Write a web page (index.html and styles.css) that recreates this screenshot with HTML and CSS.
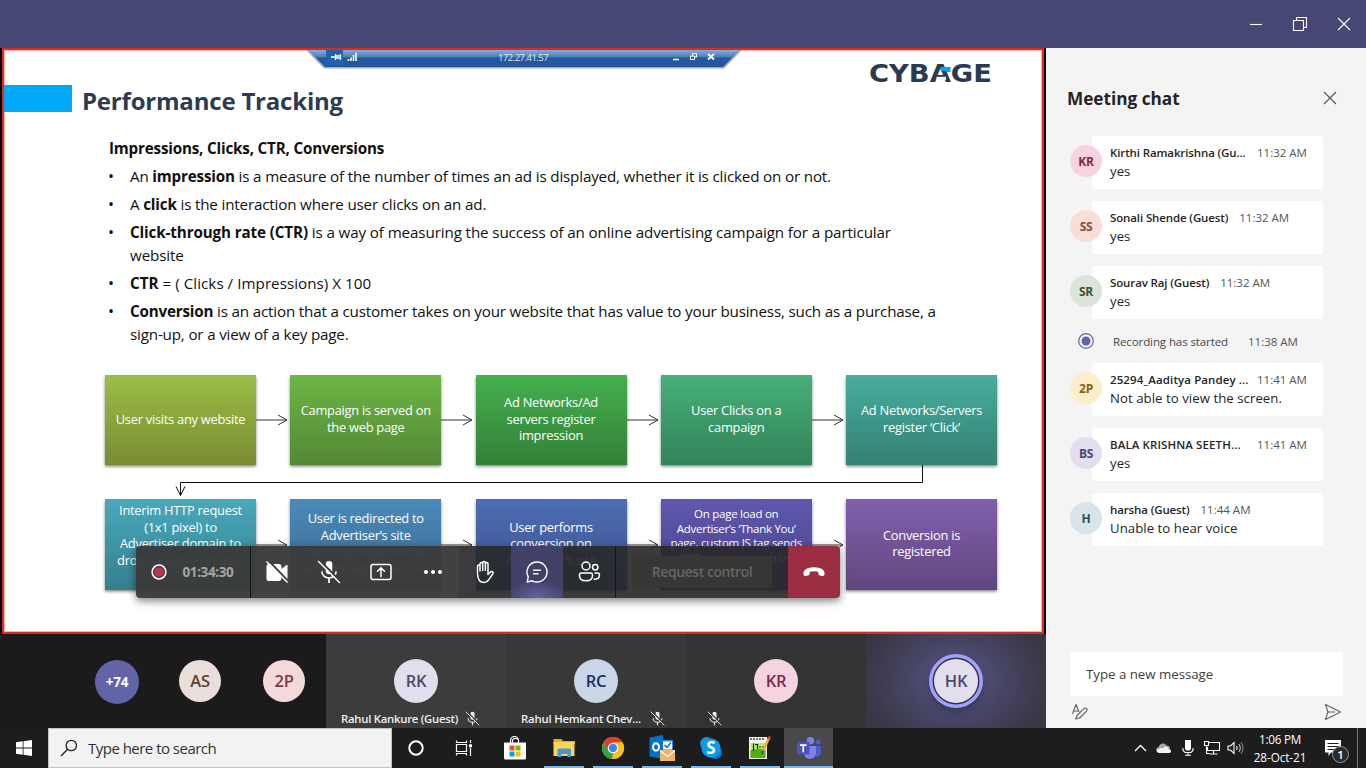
FILE: index.html
```html
<!DOCTYPE html>
<html lang="en">
<head>
<meta charset="utf-8">
<title>Meeting</title>
<link rel="stylesheet" href="styles.css">
</head>
<body>
<svg class="defs" aria-hidden="true">
  <symbol id="mic-off" viewBox="0 0 22 22">
    <rect x="8" y="1" width="6" height="12" rx="3" fill="currentColor"/>
    <path d="M4.500 10.500a6.500 6 0 0 0 13 0M11 16.500V21" fill="none" stroke="currentColor" stroke-width="1.600"/>
    <path d="M2.200 .2 22.200 20.200" stroke="#3b3b3d" stroke-width="2"/>
    <path d="M1 1 21 21" stroke="currentColor" stroke-width="1.300"/>
  </symbol>
</svg>
<div class="desktop">
  <header class="titlebar">
    <svg width="110" height="20" viewBox="0 0 110 20" fill="none" stroke="#fff" stroke-width="1.1">
      <path d="M4 10.500h12"/>
      <path d="M47.500 6.500h10v10h-10zM50.500 6.500v-3h10v10h-3"/>
      <path d="M92 4l12 12M104 4l-12 12"/>
    </svg>
  </header>

  <div class="workspace">
    <main class="stage">
      <section class="shared">
        <div class="slide">
          <div class="slide-head">
            <div class="accent"></div>
            <h1 class="slide-title">Performance Tracking</h1>
            <svg class="logo" width="124" height="22" viewBox="0 0 124 22">
              <text x="0" y="20" textLength="123" lengthAdjust="spacingAndGlyphs">CYBAGE</text>
              <path d="M67.500 14.800h9.500v3h-9.500z" fill="#fff"/>
              <path d="M71.500 5h10v5h-4v-1h-6z" fill="#00a6f5"/>
            </svg>
          </div>
          <div class="slide-text">
            <p class="lead"><b>Impressions, Clicks, CTR, Conversions</b></p>
            <ul class="bullets">
              <li class="b1">An <b>impression</b> is a measure of the number of times an ad is displayed, whether it is clicked on or not.</li>
              <li class="b2">A <b>click</b> is the interaction where user clicks on an ad.</li>
              <li class="b3"><b>Click-through rate (CTR)</b> is a way of measuring the success of an online advertising campaign for a particular<br>website</li>
              <li class="b4"><b>CTR</b> = ( Clicks / Impressions) X 100</li>
              <li class="b5"><b>Conversion</b> is an action that a customer takes on your website that has value to your business, such as a purchase, a<br>sign-up, or a view of a key page.</li>
            </ul>
          </div>
          <div class="flow">
            <div class="flow-row">
              <div class="step s1">User visits any website</div>
              <svg class="arrow" viewBox="0 0 34 12"><path d="M0 6h31M22 1l9 5-9 5"/></svg>
              <div class="step s2">Campaign is served on<br>the web page</div>
              <svg class="arrow" viewBox="0 0 34 12"><path d="M0 6h31M22 1l9 5-9 5"/></svg>
              <div class="step s3">Ad Networks/Ad<br>servers register<br>impression</div>
              <svg class="arrow" viewBox="0 0 34 12"><path d="M0 6h31M22 1l9 5-9 5"/></svg>
              <div class="step s4">User Clicks on a<br>campaign</div>
              <svg class="arrow" viewBox="0 0 34 12"><path d="M0 6h31M22 1l9 5-9 5"/></svg>
              <div class="step s5">Ad Networks/Servers<br>register ‘Click’</div>
            </div>
            <svg class="elbow" width="892" height="34" viewBox="0 0 892 34"><path d="M817.500 0V17.500H75.500V30.500M71 21.500l4.500 9 4.500-9"/></svg>
            <div class="flow-row">
              <div class="step s6">Interim HTTP request<br>(1x1 pixel) to<br>Advertiser domain to<br>drop a Cookie on user<br>PC</div>
              <svg class="arrow" viewBox="0 0 34 12"><path d="M0 6h31M22 1l9 5-9 5"/></svg>
              <div class="step s7">User is redirected to<br>Advertiser’s site<br>(landing page) via Ad<br>Network/Ad Server URL</div>
              <svg class="arrow" viewBox="0 0 34 12"><path d="M0 6h31M22 1l9 5-9 5"/></svg>
              <div class="step s8">User performs<br>conversion on<br>Advertiser’s site</div>
              <svg class="arrow" viewBox="0 0 34 12"><path d="M0 6h31M22 1l9 5-9 5"/></svg>
              <div class="step s9">On page load on<br>Advertiser’s ‘Thank You’<br>page, custom JS tag sends<br>HTTP request to retrieve<br>cookie info</div>
              <svg class="arrow" viewBox="0 0 34 12"><path d="M0 6h31M22 1l9 5-9 5"/></svg>
              <div class="step s10">Conversion is<br>registered</div>
            </div>
          </div>
        </div>

        <div class="remote-bar">
          <svg width="436" height="19" viewBox="0 0 436 19">
            <defs><linearGradient id="rb" x1="0" y1="0" x2="0" y2="1"><stop offset="0" stop-color="#82aedb"/><stop offset=".4" stop-color="#4a80bd"/><stop offset=".46" stop-color="#265a9d"/><stop offset="1" stop-color="#24559a"/></linearGradient></defs>
            <path d="M0 0h436l-18 18.500H18z" fill="#a4acb9"/>
            <path d="M2 0h432l-17 17H19z" fill="url(#rb)"/>
            <path d="M20 0h17v15H20z" fill="#1f62b0"/>
            <path d="M25 7h4M29.500 4v6M34.500 4v6M29.500 6h5M29.500 8h5" stroke="#fff" stroke-width="1.300"/>
            <path d="M42.500 11V9M45 11V7.500M47.500 11V5M50 11V2.500" stroke="#fff" stroke-width="1.600"/>
            <path d="M367 9.500h6M402 4l6 5.500M408 4l-6 5.500" stroke="#fff" stroke-width="1.700"/>
            <path d="M384.500 6h4v3.500h-4zM386.500 6V3.500h4V7h-2" fill="none" stroke="#fff"/>
          </svg>
          <span class="remote-ip">172.27.41.57</span>
        </div>

        <div class="callbar">
          <div class="cb-time">
            <svg width="18" height="18" viewBox="0 0 18 18"><circle cx="9" cy="9" r="6.900" fill="none" stroke="#fff" stroke-width="1.500"/><circle cx="9" cy="9" r="4.800" fill="#c4314b"/></svg>
            <span>01:34:30</span>
          </div>
          <div class="cb-group">
            <div class="cb-btn"><svg width="24" height="24" viewBox="0 0 24 24"><path d="M4 4h9.500a3 3 0 0 1 3 3v2l5-4h1v15h-1l-5-4v2a3 3 0 0 1-3 3H4a2.500 2.500 0 0 1-2.500-2.500v-12A2.500 2.500 0 0 1 4 4z" fill="#fff"/><path d="M3.500.500l20 21" stroke="#424243" stroke-width="2"/><path d="M1.500 1.500l21 21" stroke="#fff" stroke-width="1.400"/></svg></div>
            <div class="cb-btn"><svg width="24" height="24"><use href="#mic-off"/></svg></div>
            <div class="cb-btn"><svg width="24" height="24" viewBox="0 0 24 24" fill="none" stroke="#fff" stroke-width="1.500" stroke-linecap="round"><rect x="2" y="4.500" width="20" height="15" rx="2"/><path d="M12 16.500V8M8.500 11.300 12 7.800l3.500 3.500"/></svg></div>
            <div class="cb-btn"><svg width="24" height="24" viewBox="0 0 24 24" fill="#fff"><circle cx="5" cy="12" r="2"/><circle cx="12" cy="12" r="2"/><circle cx="19" cy="12" r="2"/></svg></div>
          </div>
          <div class="cb-group dim">
            <div class="cb-btn"><svg width="24" height="24" viewBox="0 0 24 24" fill="none" stroke="#fff" stroke-width="1.500" stroke-linecap="round" stroke-linejoin="round"><path d="M4.500 12V6.300c0-1.800 2.500-1.800 2.500 0V11 4c0-1.900 2.700-1.900 2.700 0v6.500V2.900c0-1.900 2.700-1.900 2.700 0v7.600V4c0-1.900 2.600-1.900 2.600 0v10.500l2.200-2.300c1.200-1.300 3.500-.4 2.800 1.200-2.200 3.400-4 6.600-6.200 8.300-1.500 1-5.200 1-6.800-.6C4.600 19.100 4.500 16 4.500 12z"/></svg></div>
            <div class="cb-btn active"><svg width="24" height="24" viewBox="0 0 24 24" fill="none" stroke="#fff" stroke-width="1.400" stroke-linecap="round" stroke-linejoin="round"><path d="M12 2a10 10 0 1 1-4.700 18.800L2.200 22l1.100-5.100A10 10 0 0 1 12 2zM8.500 10.200h7M8.500 13.800h4.500"/></svg></div>
            <div class="cb-btn"><svg width="24" height="24" viewBox="0 0 24 24" fill="none" stroke="#fff" stroke-width="1.500"><circle cx="9" cy="6" r="4"/><circle cx="18.200" cy="7.200" r="2.700"/><path d="M4.300 13h9.400c1 0 1.800.8 1.800 1.800v1c0 3-2.500 5-6.500 5s-6.500-2-6.500-5v-1c0-1 .8-1.800 1.800-1.800zM17.500 13h3c1 0 1.900.8 1.900 1.800v.5c0 2.600-1.800 3.900-4.200 3.900-.6 0-1 0-1.500-.2"/></svg></div>
          </div>
          <div class="cb-control"><span class="control-btn">Request control</span></div>
          <div class="cb-hang"><svg width="24" height="24" viewBox="0 0 24 24"><path d="M1.500 14.500c-.5-3 1.500-7.200 10.500-7.200s11 4.200 10.500 7.200c-.2 1.100-1 1.600-2 1.400l-2.600-.5c-.9-.2-1.400-.8-1.500-1.700l-.2-1.900c-2.500-.8-5.900-.8-8.400 0l-.2 1.900c-.1.900-.6 1.500-1.500 1.700l-2.600.5c-1 .2-1.800-.3-2-1.400z" fill="#fff"/></svg></div>
        </div>
      </section>

      <section class="people">
        <div class="overflow">
          <span class="face big c-more">+74</span>
          <span class="face c-as">AS</span>
          <span class="face c-2p">2P</span>
        </div>
        <div class="tile t1"><span class="face big c-rk">RK</span><div class="tag"><span class="tag-name">Rahul Kankure (Guest)</span><svg width="15" height="15"><use href="#mic-off"/></svg></div></div>
        <div class="tile t2"><span class="face big c-rc">RC</span><div class="tag"><span class="tag-name n2">Rahul Hemkant Chev...</span><svg width="15" height="15"><use href="#mic-off"/></svg></div></div>
        <div class="tile t3"><span class="face big c-kr">KR</span><div class="tag"><svg width="15" height="15"><use href="#mic-off"/></svg></div></div>
        <div class="tile t4"><span class="face big c-rk speaking">HK</span></div>
      </section>
    </main>

    <aside class="chat">
      <div class="chat-head">
        <h2>Meeting chat</h2>
        <svg width="14" height="14" viewBox="0 0 14 14"><path d="M1 1l12 12M13 1 1 13" stroke="#555" stroke-width="1.100"/></svg>
      </div>
      <div class="chat-list">
        <div class="msg"><span class="ava c-kr">KR</span><div class="bubble"><div class="meta"><b class="wide">Kirthi Ramakrishna (Gu...</b><time>11:32 AM</time></div><p>yes</p></div></div>
        <div class="msg"><span class="ava c-ss">SS</span><div class="bubble"><div class="meta"><b>Sonali Shende (Guest)</b><time>11:32 AM</time></div><p>yes</p></div></div>
        <div class="msg"><span class="ava c-sr">SR</span><div class="bubble"><div class="meta"><b>Sourav Raj (Guest)</b><time>11:32 AM</time></div><p>yes</p></div></div>
        <div class="event"><svg width="16" height="16" viewBox="0 0 16 16"><circle cx="8" cy="8" r="7.300" fill="none" stroke="#6264a7" stroke-width="1.200"/><circle cx="8" cy="8" r="4.500" fill="#6264a7"/></svg><span>Recording has started</span><time>11:38 AM</time></div>
        <div class="msg"><span class="ava c-yel">2P</span><div class="bubble"><div class="meta"><b class="wide loose">25294_Aaditya Pandey ...</b><time>11:41 AM</time></div><p>Not able to view the screen.</p></div></div>
        <div class="msg"><span class="ava c-rk">BS</span><div class="bubble"><div class="meta"><b class="wide loose">BALA KRISHNA SEETH...</b><time>11:41 AM</time></div><p>yes</p></div></div>
        <div class="msg"><span class="ava c-h">H</span><div class="bubble"><div class="meta"><b>harsha (Guest)</b><time>11:44 AM</time></div><p class="last">Unable to hear voice</p></div></div>
      </div>
      <div class="composer">
        <div class="compose-box">Type a new message</div>
        <div class="compose-tools">
          <svg width="18" height="18" viewBox="0 0 18 18" fill="none" stroke="#616161" stroke-width="1.100" stroke-linejoin="round"><path d="M1.500 11 5 1.500 8 9M2.800 8h4.400M15.700 5.700c-.8-.9-2-.9-2.800 0L6 12.500 4.800 16l3.800-1 7-6.900c.8-.8.8-1.700.1-2.400z"/></svg>
          <svg width="18" height="18" viewBox="0 0 18 18" fill="none" stroke="#616161" stroke-width="1.100" stroke-linejoin="round"><path d="M1.500 1.500 16.500 9l-15 7.500L4 9zM4 9h7"/></svg>
        </div>
      </div>
    </aside>
  </div>

  <footer class="taskbar">
    <div class="start"><svg width="16" height="16" viewBox="0 0 16 16" fill="#fff"><path d="M0 2.300 6.700 1.300v6.300H0zM7.500 1.200 16 0v7.600H7.500zM0 8.400h6.700v6.300L0 13.700zM7.500 8.400H16V16l-8.500-1.200z"/></svg></div>
    <div class="search">
      <svg width="18" height="18" viewBox="0 0 18 18" fill="none" stroke="#222" stroke-width="1.300"><circle cx="11.300" cy="6.500" r="5.200"/><path d="M7.600 10.200 1 17"/></svg>
      <span>Type here to search</span>
    </div>
    <div class="shell"><svg width="18" height="18" viewBox="0 0 18 18"><circle cx="9" cy="9" r="6.700" fill="none" stroke="#fff" stroke-width="2"/></svg></div>
    <div class="shell"><svg width="18" height="16" viewBox="0 0 18 16" fill="none" stroke="#fff" stroke-width="1.200"><path d="M1.500 4.500h10v7h-10zM1.500.500v2h10v-2M1.500 15.500v-2h10v2M15.500 0v3M15.500 8v8"/><path d="M14 4.300h3v3h-3z" fill="#fff" stroke="none"/></svg></div>
    <div class="apps">
      <div class="app"><svg width="24" height="24" viewBox="0 0 24 24"><path d="M7.500 7V4.500a4 4 0 0 1 8 0V7M9.500 7V4a3.500 3.500 0 0 1 6 0" fill="none" stroke="#fff" stroke-width="1.200"/><path d="M1 6.500h22V22a1.500 1.500 0 0 1-1.500 1.500h-19A1.500 1.500 0 0 1 1 22z" fill="#fff"/><path d="M6.500 9.500h5v5h-5z" fill="#f25022"/><path d="M12.500 9.500h5v5h-5z" fill="#7fba00"/><path d="M6.500 15.500h5v5h-5z" fill="#00a4ef"/><path d="M12.500 15.500h5v5h-5z" fill="#ffb900"/></svg></div>
      <div class="app run"><svg width="24" height="24" viewBox="0 0 24 24"><path d="M1.500 3h8l1.500 2h12v3H1.500z" fill="#e9a820"/><path d="M1.500 6h21v14h-21z" fill="#fcd25c"/><path d="M5.500 21v-7a1.500 1.500 0 0 1 1.500-1.500h10.500a1.500 1.500 0 0 1 1.500 1.500v7H15.500v-3h-6v3z" fill="#4099d8"/></svg></div>
      <div class="app run"><svg width="24" height="24" viewBox="0 0 24 24"><circle cx="12" cy="12" r="11" fill="#fbc116"/><path d="M2.500 6.500A11 11 0 0 1 21.500 6.500H12L7.200 14.800z" fill="#e23b2e"/><path d="M2.500 6.500 7.500 15l4.500 2.500L11 23A11 11 0 0 1 2.500 6.500z" fill="#2da44e"/><path d="M21.600 6.500H12l4.800 8.300L12 23A11 11 0 0 0 21.600 6.500z" fill="#fbc116"/><circle cx="12" cy="12" r="5.300" fill="#fff"/><circle cx="12" cy="12" r="4.200" fill="#4285f4"/></svg></div>
      <div class="app run"><svg width="26" height="26" viewBox="0 0 26 26"><path d="M13 5h11v13H13z" fill="#2b8ade"/><path d="M14 6.500h9v8h-9z" fill="#fff"/><path d="M15.500 10l2.500 2.500 4-5" fill="none" stroke="#0072c6" stroke-width="1.500"/><path d="M.500 2.500 14 0v24L.500 21.500z" fill="#0072c6"/><ellipse cx="7" cy="12" rx="3" ry="3.700" fill="none" stroke="#fff" stroke-width="2"/><path d="M11 15h15v11H11z" fill="#f0b56b"/><path d="M11 15.500l7.500 6 7.500-6" fill="none" stroke="#fff" stroke-width="1.100"/></svg></div>
      <div class="app run"><svg width="24" height="24" viewBox="0 0 24 24"><circle cx="7.500" cy="7.500" r="6.500" fill="#1c8fdc"/><circle cx="16.500" cy="16.500" r="6.500" fill="#0078d4"/><circle cx="12" cy="12" r="9.600" fill="#0a9ce8"/><text class="skype-s" x="12" y="18" text-anchor="middle">S</text></svg></div>
      <div class="app run"><svg width="24" height="24" viewBox="0 0 24 24"><path d="M1 1h18v22H1z" fill="#f3f3ee"/><path d="M2.500 7h15v15h-15z" fill="#b9ec6c"/><path d="M2.500 14c6-1.500 9-1 15-1v9h-15z" fill="#4fb010"/><path d="M3 2v2M6 2v2M9 2v2M12 2v2M15 2v2M5.500 15V7.500M7 8.500h2.500v4.500M11 11h2M14 11h2" stroke="#222" stroke-width="1.200" fill="none"/><path d="M21 2 15 15" stroke="#f2b01e" stroke-width="2.600"/><path d="M22 .500 20.800 3" stroke="#d24b3c" stroke-width="2.600"/><path d="M15 14.500l-1 3.500" stroke="#333" stroke-width="1.300"/></svg></div>
      <div class="app run current"><svg width="26" height="24" viewBox="0 0 26 24"><circle cx="22" cy="6" r="2.600" fill="#5059c9"/><path d="M17 10h8v7a4.500 4.500 0 0 1-7 3z" fill="#5059c9"/><circle cx="14.500" cy="4.700" r="3.700" fill="#7b83eb"/><path d="M8 10h12v7a6 6 0 0 1-12 0z" fill="#7b83eb"/><rect x="1" y="6" width="12.500" height="12.500" rx="1.200" fill="#4b53bc"/><path d="M4 9.200h6.500M7.250 9.200v7" stroke="#fff" stroke-width="1.700"/></svg></div>
    </div>
    <div class="tray">
      <div class="tr"><svg width="14" height="10" viewBox="0 0 14 10"><path d="M2 8 7.500 2.500 13 8" fill="none" stroke="#fff" stroke-width="1.300"/></svg></div>
      <div class="tr"><svg width="18" height="12" viewBox="0 0 18 12"><path d="M4 10C.5 10 .3 5.500 3.500 5.200 4.500 1.500 9 0 11.500 3.500 14 3.500 15 5 15 7z" fill="#a8a8a8"/><path d="M4 11c-3 0-3-3.700 0-3.900C5 6 7 5.700 8 6.500c1.500-2.500 5.500-2 5.800.7 3-.1 3 3.800.2 3.800z" fill="#f2f2f2"/></svg></div>
      <div class="tr"><svg width="12" height="16" viewBox="0 0 12 16"><path d="M3 0h6v8.500L8 10.500H4L3 8.500z" fill="#fff"/><path d="M1 8v2.500l2 2h6l2-2V8M6 12.500v3M3 15.300h6" fill="none" stroke="#fff" stroke-width="1.100"/></svg></div>
      <div class="tr"><svg width="18" height="16" viewBox="0 0 18 16" fill="none" stroke="#fff" stroke-width="1.100"><path d="M6 2.500h10.500v8H4.500V7M10.500 10.500v3M6.500 14h8M1.500 1.500h4v4h-4zM3.500 5.500v8h3"/></svg></div>
      <div class="tr"><svg width="18" height="14" viewBox="0 0 18 14" fill="none" stroke="#fff" stroke-width="1.100"><path d="M1 5h2.500L7 1.500v11L3.500 9H1zM9.500 5q1.500 2 0 4"/><path d="M11.800 3q3 4 0 8" opacity=".75"/><path d="M14 1.200q4 5.800 0 11.600" opacity=".45"/></svg></div>
      <div class="clock"><span>1:06 PM</span><span class="date">28-Oct-21</span></div>
      <div class="notif"><svg width="17" height="16" viewBox="0 0 17 16"><path d="M0 0h16v12.500H6L3.500 16v-3.500H0z" fill="#fff"/><path d="M2.500 3.500h11M2.500 6.500h11M2.500 9.500h8" stroke="#1d1d1d"/></svg><span class="badge">1</span></div>
      <div class="peek"></div>
    </div>
  </footer>
</div>
</body>
</html>
```
FILE: styles.css
```css
* { box-sizing: border-box; }
body { margin: 0; font-family: "Open Sans", "Noto Sans", sans-serif; overflow: hidden; }
h1, h2, p, ul { margin: 0; padding: 0; }
svg { display: block; flex: none; }
.defs { position: absolute; width: 0; height: 0; }
.desktop { width: 1366px; height: 768px; display: flex; flex-direction: column; overflow: hidden; background: #000; }
.titlebar { height: 48px; flex: none; background: #464775; display: flex; justify-content: flex-end; align-items: center; padding-right: 10px; }
.workspace { height: 680px; flex: none; display: flex; }
.stage { width: 1046px; display: flex; flex-direction: column; }

/* shared slide */
.shared { position: relative; height: 586px; padding: 0 2px; background: #000; }
.slide { height: 586px; background: #fff; border: 2px solid #e02722; box-shadow: inset 0 0 0 1px #f5b5b3; display: flex; flex-direction: column; }
.slide-head { height: 75px; flex: none; display: flex; align-items: flex-start; }
.accent { width: 68px; height: 27.500px; margin-top: 34.500px; background: #00a8f8; }
.slide-title { margin: 34px 0 0 10px; width: 786px; font-size: 24px; line-height: 34px; letter-spacing: -0.2px; color: #2d3b50; white-space: nowrap; }
.logo { margin: 12px 0 0 1px; overflow: visible; }
.logo text { font: bold 24.500px "DejaVu Sans", sans-serif; fill: #2b3a50; }
.slide-text { height: 249.500px; flex: none; padding: 12px 0 0 105px; color: #111; font-size: 15.200px; line-height: 23px; white-space: nowrap; }
.lead { letter-spacing: -0.18px; margin-bottom: 5px; }
.bullets { list-style: none; display: flex; flex-direction: column; gap: 5.100px; padding-left: 21px; }
.bullets li::before { content: "•"; float: left; margin-left: -22px; font-size: 16px; }
.bullets li { letter-spacing: -0.17px; }
.bullets .b3 { letter-spacing: -0.12px; }
.bullets .b4 { letter-spacing: 0.03px; }
.bullets .b5 { letter-spacing: -0.18px; }
.flow { width: 892px; margin-left: 101px; font-size: 12.900px; line-height: 16.500px; letter-spacing: -0.27px; color: #fff; text-align: center; }
.flow-row { display: flex; justify-content: space-between; align-items: center; height: 90.500px; }
.step { width: 151px; height: 90.500px; padding-bottom: 2px; display: grid; align-content: center; white-space: nowrap; box-shadow: 0 1.500px 3px rgba(0,0,0,.5); }
.arrow { width: 34px; height: 12px; fill: none; stroke: #333; margin-top: 1px; }
.elbow { fill: none; stroke: #111; }
.s1 { background: linear-gradient(#9cbd45, #788c34); }
.s2 { background: linear-gradient(#6db545, #528837); }
.s3 { background: linear-gradient(#45b04c, #338039); }
.s4 { background: linear-gradient(#46b078, #33825a); }
.s5 { background: linear-gradient(#47ae9d, #358074); }
.s6 { background: linear-gradient(#48a9bb, #367f8d); }
.s7 { background: linear-gradient(#4b8aba, #38688d); }
.s8 { background: linear-gradient(#4f6db6, #3c5289); }
.s9 { background: linear-gradient(#5f58b0, #474285); font-size: 11.500px; line-height: 14.500px; }
.s10 { background: linear-gradient(#8160ac, #62467f); }

/* remote desktop bar */
.remote-bar { position: absolute; left: 306px; top: 2px; width: 436px; height: 19px; }
.remote-ip { position: absolute; left: 192px; top: 1px; font: 9.500px/14px "Open Sans", sans-serif; letter-spacing: -0.52px; color: #dfeaf7; }

/* floating call controls */
.callbar { position: absolute; left: 136px; top: 498px; width: 704px; height: 52px; display: flex; border-radius: 4px; overflow: hidden; box-shadow: 0 3px 9px rgba(0,0,0,.5); }
.cb-time { width: 115px; display: flex; align-items: center; gap: 14.500px; padding-left: 14px; background: rgba(58,58,58,.965); border-right: 1px solid #151515; color: #a5a5a5; font-size: 13.500px; font-weight: 700; letter-spacing: -0.4px; }
.cb-group { display: flex; background: rgba(58,58,58,.965); }
.cb-group:not(.dim) { width: 208px; }
.cb-btn { width: 52px; display: grid; place-items: center; color: #fff; }
.cb-group.dim { background: rgba(41,41,43,.915); width: 157px; border-right: 1px solid #151515; }
.active { background: radial-gradient(ellipse 30px 18px at 50% 100%, #6664a2, rgba(68,66,110,.9) 100%); }
.cb-control { width: 172px; display: flex; align-items: center; padding-left: 16px; background: rgba(41,41,43,.915); }
.control-btn { width: 140px; height: 32px; border-radius: 3px; background: #373634; color: #666; font-size: 14px; font-weight: 600; line-height: 32px; text-align: center; letter-spacing: -0.45px; white-space: nowrap; }
.cb-hang { width: 52px; background: #9c2e43; display: grid; place-items: center; }

/* participants */
.people { height: 94px; display: flex; background: #1b1b1b; }
.overflow { width: 326px; display: flex; align-items: center; padding-left: 95px; }
.c-as { margin: 0 42px 0 40px; }
.face { width: 42px; height: 42px; border-radius: 50%; display: grid; place-items: center; font-size: 16.500px; font-weight: 600; flex: none; padding-bottom: 1px; letter-spacing: -0.3px; }
.big { width: 44px; height: 44px; }
.overflow .big { font-size: 13.500px; font-weight: 700; margin-top: 2px; padding-bottom: 0; }
.c-more { background: #6264a7; color: #fff; }
.c-as { background: #e9dfda; color: #5b4034; }
.c-2p { background: #f3d9da; color: #7d3946; }
.c-rk { background: #e2deed; color: #4e4571; }
.c-rc { background: #cad6e8; color: #14315f; }
.c-kr { background: #f5d4df; color: #7d2848; }
.c-ss { background: #fbddd8; color: #8c4a3d; }
.c-sr { background: #dce3d9; color: #40532f; }
.c-yel { background: #fdeeca; color: #816218; }
.c-h { background: #d8e4ea; color: #2f4d58; }
.tile { width: 180px; display: flex; flex-direction: column; align-items: center; padding-top: 25px; }
.t1 { background: #3c3c3c; }
.t2 { background: #383838; }
.t3 { background: #333; }
.t4 { background: radial-gradient(ellipse 95px 75px at 50% 50%, #5d5b91 0%, #474564 50%, #383744 100%); }
.speaking { box-shadow: 0 0 0 1.500px #343246, 0 0 0 5px #9ea2ff, 0 4px 8px 4px rgba(30,30,45,.5); }
.tag { width: 100%; display: flex; align-items: center; gap: 7px; padding-left: 15px; height: 20px; margin-top: 6.500px; color: #f0f0f0; font-size: 11.300px; font-weight: 600; letter-spacing: -0.24px; white-space: nowrap; }
.t3 .tag { padding-left: 21px; }
.tag-name { width: 117px; }
.tag-name.n2 { width: 122px; letter-spacing: -0.18px; }

/* chat pane */
.chat { width: 320px; background: #f4f4f4; color: #252424; display: flex; flex-direction: column; }
.chat-head { height: 88px; padding: 14px 29px 0 21px; display: flex; align-items: center; justify-content: space-between; }
.chat-head svg { margin-bottom: 2px; }
.chat-head h2 { font-size: 17.200px; letter-spacing: 0; line-height: 24px; }
.chat-list { height: 516px; display: flex; flex-direction: column; gap: 12px; padding-left: 24px; }
.msg { display: flex; height: 53px; align-items: flex-start; }
.ava { width: 32px; height: 32px; border-radius: 50%; margin-top: 9px; margin-right: -10px; display: grid; place-items: center; font-size: 12px; font-weight: 700; z-index: 1; letter-spacing: -0.3px; }
.bubble { width: 231px; height: 53px; background: #fff; border-radius: 3px; padding: 8px 0 0 18px; }
.meta { display: flex; gap: 11px; font-size: 11.500px; line-height: 17px; letter-spacing: -0.12px; white-space: nowrap; }
.meta b { font-weight: 600; }
.meta .wide { width: 136px; }
.meta .loose { letter-spacing: 0.1px; }
time { color: #555; letter-spacing: 0; }
.bubble p { font-size: 13.200px; line-height: 20px; letter-spacing: 0.05px; }
.bubble .last { letter-spacing: 0.05px; }
.event { height: 20px; display: flex; align-items: center; padding-left: 8px; font-size: 11.500px; color: #484848; letter-spacing: -0.1px; }
.event span { box-sizing: content-box; width: 115px; padding-left: 19px; margin-right: 20px; white-space: nowrap; }
.composer { padding: 0 23px 0 24px; }
.compose-box { height: 44px; background: #fff; border-radius: 3px; padding-left: 16px; font-size: 13.300px; line-height: 44px; letter-spacing: -0.03px; color: #424242; }
.compose-tools { display: flex; justify-content: space-between; padding: 7px 1px 0; }

/* taskbar */
.taskbar { height: 40px; background: #1d1d1d; display: flex; align-items: stretch; color: #fff; }
.start, .shell { width: 48px; display: grid; place-items: center; }
.search { width: 344px; background: #f2f2f2; border: 1px solid #c3c3c3; display: flex; align-items: center; gap: 10px; padding-left: 11px; color: #333; font-size: 15px; letter-spacing: -0.52px; }
.apps { display: flex; margin-left: 2px; }
.app { width: 49px; display: grid; place-items: center; background-repeat: no-repeat; }
.run { background-image: linear-gradient(#76b9ed, #76b9ed); background-size: 40px 2px; background-position: 50% 100%; }
.current { background-color: #494949; background-size: 49px 2px; }
.skype-s { font: bold 17px "Open Sans", sans-serif; fill: #fff; }
.tray { margin-left: auto; display: flex; }
.tr { width: 24px; padding-left: 2px; display: grid; place-items: center; }
.clock { width: 66px; display: flex; flex-direction: column; align-items: center; font-size: 11.700px; line-height: 18px; padding-top: 2px; letter-spacing: -0.25px; }
.date { letter-spacing: -0.05px; }
.notif { position: relative; width: 40px; padding: 12px 0 0 12px; }
.badge { position: absolute; left: 19px; top: 18px; width: 17px; height: 17px; border: 1px solid #999; border-radius: 50%; background: #2b2b2b; font-size: 11.500px; font-weight: 600; line-height: 15px; text-align: center; }
.peek { width: 9px; margin-left: 4px; border-left: 1px solid #777; }
```
